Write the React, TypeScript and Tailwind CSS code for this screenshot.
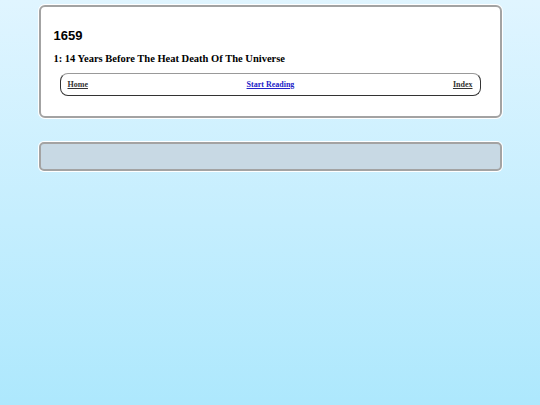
const links = [
  { label: "Home", href: "#", className: "text-[#333]" },
  { label: "Start Reading", href: "#", className: "text-[#2323c8]" },
  { label: "Index", href: "#", className: "text-[#333]" },
];

export default function App() {
  return (
    <div className="min-h-screen bg-gradient-to-b from-[#e0f5ff] to-[#ade8fd] pt-[5px]">
      {/* Story header card */}
      <div className="mx-auto w-[463px] h-[113px] rounded-[6px] border-2 border-[#a3a3a3] bg-white px-[13px] pt-[21px] shadow-[0_0_0_1px_#ffffff]">
        <h1 className="font-['Liberation_Sans',sans-serif] text-[13px] leading-[16px] font-bold text-black">
          1659
        </h1>
        <h2 className="mt-[8px] font-['Liberation_Serif',serif] text-[10.5px] leading-[14px] font-bold text-black">
          1: 14 Years Before The Heat Death Of The Universe
        </h2>
        <nav className="mx-[6px] mt-[7px] flex h-[23px] items-center justify-between rounded-[8px] border border-[#333] border-t-[#999] px-[7px]">
          {links.map((l) => (
            <a
              key={l.label}
              href={l.href}
              className={`font-['Liberation_Serif',serif] text-[8px] font-bold underline ${l.className}`}
            >
              {l.label}
            </a>
          ))}
        </nav>
      </div>

      {/* Empty panel below */}
      <div className="mx-auto mt-[24px] h-[29px] w-[463px] rounded-[5px] border-2 border-[#a3a3a3] bg-[#c8d9e4] shadow-[0_0_0_1px_#ffffff]" />
    </div>
  );
}
